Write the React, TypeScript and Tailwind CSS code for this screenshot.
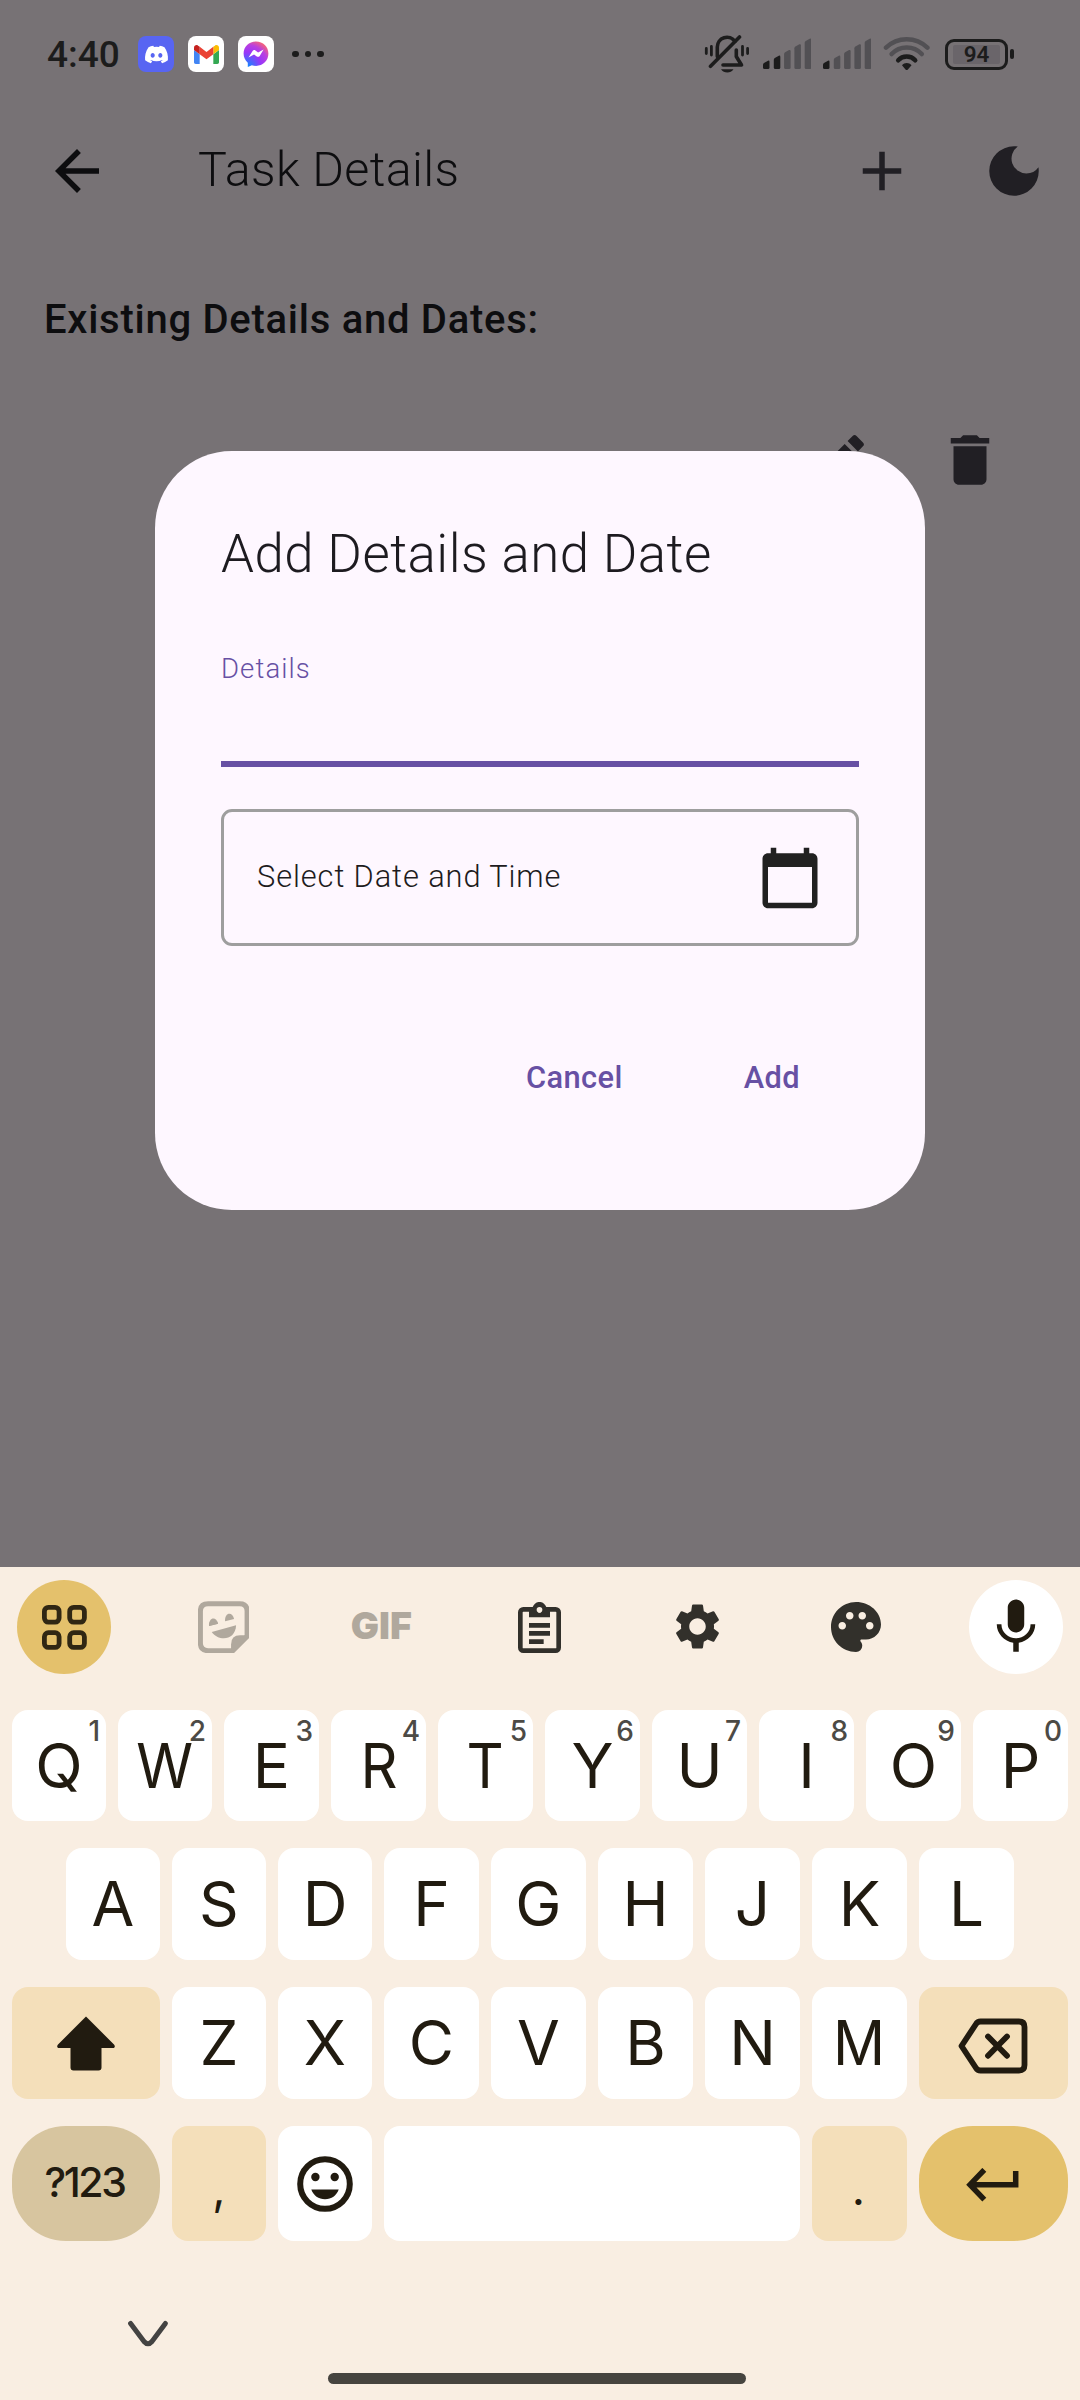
import React from 'react'
import type { ReactNode } from 'react'
import { FaDiscord } from 'react-icons/fa'
import {
  MdArrowBack,
  MdAdd,
  MdDarkMode,
  MdEdit,
  MdDelete,
  MdCalendarToday,
  MdSettings,
  MdPalette,
  MdMic,
} from 'react-icons/md'

const BAR_TOPS = [25.7, 20.7, 15, 9.3, 3.7]

function GmailLogo() {
  return (
    <svg width="25" height="19" viewBox="52 42 88 66">
      <path fill="#4285f4" d="M58 108h14V74L52 59v43c0 3.32 2.69 6 6 6" />
      <path fill="#34a853" d="M120 108h14c3.32 0 6-2.69 6-6V59l-20 15" />
      <path fill="#fbbc04" d="M120 48v26l20-15v-8c0-7.42-8.47-11.65-14.4-7.2" />
      <path fill="#ea4335" d="M72 74V48l24 18 24-18v26L96 92" />
      <path fill="#c5221f" d="M52 51v8l20 15V48l-5.6-4.2c-5.94-4.45-14.4-.22-14.4 7.2" />
    </svg>
  )
}

function MessengerLogo() {
  return (
    <svg width="26" height="26" viewBox="0 0 26 26">
      <defs>
        <radialGradient id="msg" cx="0.15" cy="1" r="1.15">
          <stop offset="0" stopColor="#0a8cff" />
          <stop offset="0.5" stopColor="#9a36f8" />
          <stop offset="0.75" stopColor="#b93fe0" />
          <stop offset="1" stopColor="#ff6a68" />
        </radialGradient>
      </defs>
      <path
        fill="url(#msg)"
        d="M13 .4C5.900.400.600 5.600.600 12.600c0 3.700 1.500 6.800 4.200 9.100V26l4.100-1.700c1.300.4 2.600.6 4.100.6 7.100 0 12.400-5.200 12.400-12.300S20.100.4 13 .4z"
      />
      <path fill="#fff" d="M5.500 16.400l4.100-6.500c.6-1 1.900-1.200 2.800-.5l2.700 2 5.500-2.900-3.900 6.400c-.6 1-2 1.200-2.900.5l-2.800-2z" />
    </svg>
  )
}

function BellOff() {
  return (
    <svg width="46" height="38" viewBox="0 0 46 38" fill="none" stroke="#1c1c1c" strokeWidth="3.600" strokeLinecap="round">
      <path d="M13.300 21.500V12a9.700 9.700 0 0 1 17.600-5.600" />
      <path d="M32.300 15v6.500L37.500 30H19" strokeLinejoin="round" />
      <path d="M6.500 31.300L35.500 2" />
      <path d="M17 34.200h12.500c-1.500 2.200-3.700 3.300-6.200 3.300s-4.800-1.100-6.300-3.300z" fill="#1c1c1c" stroke="none" />
      <path d="M2.300 13.500v5M7.400 11.500v8.500M38.500 11.500v8.500M43.600 13.500v5" strokeWidth="2.800" />
    </svg>
  )
}

function Signal({ active }: { active: number }) {
  return (
    <svg width="48" height="38" viewBox="0 0 48 38">
      {BAR_TOPS.map((top, i) => {
        const x = i * 10.3 + (i > 0 ? 0.5 : 0)
        return (
          <path
            key={top}
            fill={i < active ? '#1c1c1c' : '#525054'}
            d={`M${x} ${top + 4}Q${x} ${top + 3} ${x + 1} ${top + 2.3}L${x + 5} ${top}Q${x + 6.500} ${top - 0.5} ${x + 6.500} ${top + 1}V32.500Q${x + 6.500} 34 ${x + 5} 34H${x + 1.5}Q${x} 34 ${x} 32.500Z`}
          />
        )
      })}
    </svg>
  )
}

function Wifi() {
  return (
    <svg width="48" height="38" viewBox="0 0 48 38" fill="none" strokeWidth="4.500">
      <path stroke="#525054" strokeLinecap="round" d="M3 12.700A29.700 29.700 0 0 1 44.400 12.700" />
      <path stroke="#525054" strokeLinecap="round" d="M8.600 19A20.700 20.700 0 0 1 38.800 19" />
      <path stroke="#1c1c1c" strokeLinecap="round" d="M15.200 25.300A11.500 11.500 0 0 1 32.200 25.300" />
      <path fill="#1c1c1c" d="M19 30.300c2.500-3.200 7-3.200 9.500 0l-3.600 4.200c-.8.800-1.600.8-2.400 0z" />
    </svg>
  )
}

function Battery() {
  return (
    <div className="flex items-center gap-[2px]">
      <div className="flex h-[31px] w-[63px] items-center justify-center rounded-[9px] border-3 border-[#1c1c1c]">
        <div className="flex h-[19px] w-[47px] items-center justify-center rounded-[2px] bg-[#6a656a] text-[22.500px] leading-none font-semibold text-[#1c1c1c]">
          94
        </div>
      </div>
      <div className="h-[10px] w-[4px] rounded-[2px] bg-[#1c1c1c]" />
    </div>
  )
}

function StatusBar() {
  return (
    <div className="flex h-[108px] items-center justify-between pr-[66px] pl-[47px] text-[#1c1c1c]">
      <div className="flex items-center">
        <span className="w-[91px] text-[37px] leading-none font-medium">4:40</span>
        <div className="flex items-center gap-[14px]">
          <span className="flex size-9 items-center justify-center rounded-[8px] bg-[#5865f2]">
            <FaDiscord size={25} color="#fff" />
          </span>
          <span className="flex size-9 items-center justify-center rounded-[8px] bg-white">
            <GmailLogo />
          </span>
          <span className="flex size-9 items-center justify-center rounded-[8px] bg-white">
            <MessengerLogo />
          </span>
        </div>
        <div className="ml-[18px] flex gap-[6px]">
          <i className="size-[6.500px] rounded-full bg-[#1c1c1c]" />
          <i className="size-[6.500px] rounded-full bg-[#1c1c1c]" />
          <i className="size-[6.500px] rounded-full bg-[#1c1c1c]" />
        </div>
      </div>
      <div className="flex items-center">
        <BellOff />
        <div className="ml-[13px] flex gap-[12px]">
          <Signal active={2} />
          <Signal active={1} />
          <Wifi />
        </div>
        <div className="ml-[14px]">
          <Battery />
        </div>
      </div>
    </div>
  )
}

function AppBar() {
  return (
    <div className="mt-[30px] flex h-[66px] items-center pr-[33px] pl-[44px] text-[#211f24]">
      <MdArrowBack size={66} color="#0d0d0f" />
      <h1 className="ml-[88px] flex-1 pb-[1px] text-[48.400px] leading-none font-light tracking-[0.4px] text-[#0d0d0f]">
        Task Details
      </h1>
      <MdAdd size={66} className="mr-[66px]" />
      <MdDarkMode size={66} />
    </div>
  )
}

function Dialog() {
  return (
    <div className="absolute top-[451px] left-[155px] flex h-[759px] w-[770px] flex-col rounded-[77px] bg-[#fef7ff] pt-[70px]">
      <h2 className="px-[66px] text-[52.800px] leading-[66px] font-light tracking-[0.45px] text-[#1d1b20]">
        Add Details and Date
      </h2>
      <div className="mx-[66px] mt-[64px] h-[116px] border-b-6 border-[#6750a4]">
        <div className="text-[27.500px] leading-[36px] font-light tracking-[1.1px] text-[#6750a4]">Details</div>
      </div>
      <div className="mx-[66px] mt-[42px] flex h-[137px] items-center justify-between rounded-[11px] border-3 border-[#9e9e9e] pr-[33px] pl-[33px]">
        <span className="text-[30.800px] font-light tracking-[0.9px] text-[#1d1b20]">Select Date and Time</span>
        <MdCalendarToday size={66} color="#212121" />
      </div>
      <div className="mt-[77px] flex h-[110px] items-center justify-end gap-[55px] pr-[92px] text-[30.800px] font-medium tracking-[0.4px] text-[#6750a4]">
        <button className="px-[33px]">Cancel</button>
        <button className="px-[33px]">Add</button>
      </div>
    </div>
  )
}

function GridIcon() {
  return (
    <svg width="45" height="45" viewBox="0 0 45 45" fill="none" stroke="#302713" strokeWidth="4.800">
      <rect x="2.400" y="2.400" width="14.700" height="14.700" rx="4" />
      <rect x="27.700" y="2.400" width="14.700" height="14.700" rx="4" />
      <rect x="2.400" y="27.700" width="14.700" height="14.700" rx="4" />
      <rect x="27.700" y="27.700" width="14.700" height="14.700" rx="4" />
    </svg>
  )
}

function StickerIcon() {
  return (
    <svg width="51.500" height="52" viewBox="54 30 154 156" fill="#b0a89d">
      <path
        d="M84 38H179Q201 38 201 60V136L158 179H84Q61 179 61 157V60Q61 38 84 38Z"
        fill="none"
        stroke="#b0a89d"
        strokeWidth="15"
      />
      <path d="M153 186V160Q153 133 180 133H208V139L161 186Z" />
      <path d="M87 105A13.900 13.900 0 0 1 114 98Z" />
      <path d="M87 105C85 78 109 75 114 98Z" />
      <path d="M135 91C133 64 157 61 162 84Z" />
      <path d="M95 123L168 103C166 150 115 152 95 123Z" />
    </svg>
  )
}

function ClipboardIcon() {
  return (
    <svg width="43" height="51" viewBox="1014 33 129 153" fill="#32302b">
      <rect x="1021" y="55" width="115" height="124" rx="9" fill="none" stroke="#32302b" strokeWidth="14" />
      <path
        fillRule="evenodd"
        d="M1047 79V50H1057C1066 27 1091 27 1100 50H1110V79ZM1078.500 48A8.500 8.500 0 1 0 1078.600 48Z"
      />
      <path d="M1047 96h63v14h-63zM1047 120h63v14h-63zM1047 145h44v14h-44z" />
      <circle cx="1078.500" cy="56.500" r="8.500" fill="#f9eee2" />
    </svg>
  )
}

function ToolSlot({ className, children }: { className?: string; children: ReactNode }) {
  return <div className={`flex size-[94px] items-center justify-center rounded-full ${className ?? ''}`}>{children}</div>
}

function Toolbar() {
  return (
    <div className="flex justify-between px-[17px] pt-[13px] text-[#32302b]">
      <ToolSlot className="bg-[#e4c16c]">
        <GridIcon />
      </ToolSlot>
      <ToolSlot className="pl-[2px]">
        <StickerIcon />
      </ToolSlot>
      <ToolSlot className="pb-[2px]">
        <span className="font-[Inter] text-[37.500px] leading-none font-black text-[#b0a89d]">GIF</span>
      </ToolSlot>
      <ToolSlot>
        <ClipboardIcon />
      </ToolSlot>
      <ToolSlot className="pr-[2px] pb-[1px]">
        <MdSettings size={55} />
      </ToolSlot>
      <ToolSlot className="pr-[3px] pb-[1px]">
        <MdPalette size={60} />
      </ToolSlot>
      <ToolSlot className="bg-white">
        <MdMic size={66} color="#211b10" />
      </ToolSlot>
    </div>
  )
}

const CONDENSED = 'WMTR'

// `slim` keys are one pixel narrower so that the columns of every row land on whole pixels.
function Key({ label, hint, slim }: { label: string; hint?: string; slim?: boolean }) {
  return (
    <div
      className={`relative flex items-center justify-center rounded-[16px] bg-white text-[62px] leading-none ${slim ? 'w-[94px]' : 'w-[95px]'}`}
    >
      <span className={CONDENSED.includes(label) ? 'scale-x-[0.93]' : ''}>{label}</span>
      {hint && (
        <span className="absolute top-[7px] right-[6px] text-[28px] leading-none font-medium text-[#4c4a45]">{hint}</span>
      )}
    </div>
  )
}

function EmojiIcon() {
  return (
    <svg width="56" height="56" viewBox="0 0 56 56" fill="#211b10">
      <circle cx="28" cy="28" r="24.800" fill="none" stroke="#211b10" strokeWidth="6" />
      <circle cx="18.400" cy="21" r="4.200" />
      <circle cx="37.700" cy="21" r="4.200" />
      <path d="M14.300 33.500H41.700C39.500 39.500 34.500 43.300 28 43.300S16.500 39.500 14.300 33.500Z" />
    </svg>
  )
}

function ShiftIcon() {
  return (
    <svg width="58" height="55" viewBox="0 0 58 55" fill="#211b10">
      <path d="M29 .5L57 28.500C58.500 30.500 57.800 32 56 32H44.500V51.500Q44.500 54.500 41.500 54.500H16.500Q13.500 54.500 13.500 51.500V32H2C.2 32-.5 30.500 1 28.500Z" />
    </svg>
  )
}

function BackspaceIcon() {
  return (
    <svg width="70" height="56" viewBox="0 0 70 56" fill="none" stroke="#211b10" strokeWidth="5.800">
      <path strokeLinejoin="round" d="M22.500 3.500H61Q66.500 3.500 66.500 9V47Q66.500 52.500 61 52.500H22.500Q19.500 52.500 18 50L3.500 28L18 6Q19.500 3.500 22.500 3.500Z" />
      <path strokeLinecap="round" d="M30 18.500L49 37.800M49 18.500L30 37.800" />
    </svg>
  )
}

function EnterIcon() {
  return (
    <svg width="53" height="34" viewBox="0 0 53 34" fill="none" stroke="#211b10" strokeWidth="5.500">
      <path d="M18.300 1.800L4 16.700L18.300 31.700M4 16.700H49.700V3" />
    </svg>
  )
}

function Keyboard() {
  return (
    <div className="flex h-[833px] flex-col bg-[#f9eee2] font-[Inter] text-[#211b10]">
      <Toolbar />
      <div className="mt-[36px] flex flex-col px-[12px]">
        <div className="flex h-[111px] gap-[12px]">
          {'QWERTYUIOP'.split('').map((c, i) => (
            <Key key={c} label={c} hint={String((i + 1) % 10)} slim={i < 2} />
          ))}
        </div>
        <div className="mt-[27px] flex h-[112px] gap-[12px] px-[54px]">
          {'ASDFGHJKL'.split('').map((c, i) => (
            <Key key={c} label={c} slim={i < 3} />
          ))}
        </div>
        <div className="mt-[27px] flex h-[112px] gap-[12px]">
          <div className="flex w-[148px] items-center justify-center rounded-[16px] bg-[#f4dfba] pr-[1px]">
            <ShiftIcon />
          </div>
          {'ZXCVBNM'.split('').map((c, i) => (
            <Key key={c} label={c} slim={i < 2} />
          ))}
          <div className="flex w-[149px] items-center justify-center rounded-[16px] bg-[#f4dfba] pt-[5px] pr-[2px]">
            <BackspaceIcon />
          </div>
        </div>
        <div className="mt-[27px] flex h-[115px] gap-[12px]">
          <div className="flex w-[148px] items-center justify-center rounded-[54px] bg-[#d7c59f] pr-[3px] pb-[2px] text-[41px] leading-none font-medium tracking-[-2.400px]">
            ?123
          </div>
          <div className="flex w-[94px] items-center justify-center rounded-[16px] bg-[#f4dfba] pt-[8px] text-[46px] leading-none">
            ,
          </div>
          <div className="flex w-[94px] items-center justify-center rounded-[16px] bg-white">
            <EmojiIcon />
          </div>
          <div className="w-[416px] rounded-[16px] bg-white" />
          <div className="flex w-[95px] items-center justify-center rounded-[16px] bg-[#f4dfba] pt-[8px] pr-[2px] text-[46px] leading-none">
            .
          </div>
          <div className="flex w-[149px] items-center justify-center rounded-[54px] bg-[#e4c16c] pt-[3px] pr-[3px]">
            <EnterIcon />
          </div>
        </div>
      </div>
      <div className="mt-[79px] pl-[127px]">
        <svg width="42" height="28" viewBox="0 0 42 28" fill="none" stroke="#444342" strokeWidth="5" strokeLinecap="round">
          <path d="M3.600 3.500L17 21.500Q21 26 25 21.500L38.400 3.500" />
        </svg>
      </div>
      <div className="mt-auto mb-[16px] ml-[328px] h-[11px] w-[418px] rounded-full bg-[#46443f]" />
    </div>
  )
}

export default function App() {
  return (
    <div className="flex h-[2400px] w-[1080px] flex-col overflow-hidden font-[Roboto,sans-serif]">
      <div className="relative h-[1567px] bg-[#777275]">
        <StatusBar />
        <AppBar />
        <h2 className="mt-[96px] pl-[44px] text-[40px] leading-[40px] font-medium tracking-[0.73px] text-[#0d0d0f]">
          Existing Details and Dates:
        </h2>
        <div className="mt-[87px] flex justify-end gap-[65px] pr-[77px] text-[#211f24]">
          <MdEdit size={66} />
          <MdDelete size={66} />
        </div>
        <Dialog />
      </div>
      <Keyboard />
    </div>
  )
}
